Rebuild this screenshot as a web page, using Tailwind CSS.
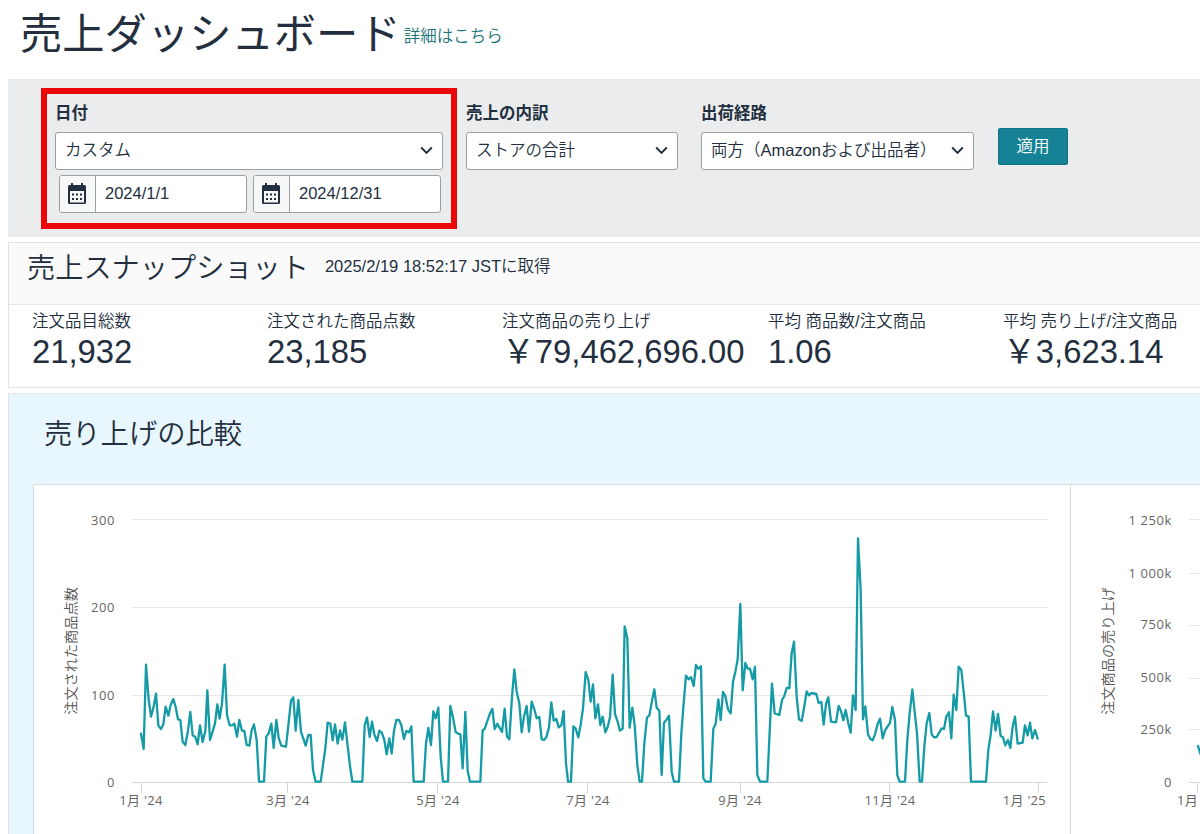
<!DOCTYPE html>
<html lang="ja">
<head>
    <meta charset="UTF-8">
    <meta name="viewport" content="width=device-width, initial-scale=1.0">
    <title>売上ダッシュボード</title>
    <script src="https://cdn.jsdelivr.net/npm/@tailwindcss/browser@4"></script>
</head>
<body class="w-[1200px] h-[834px] overflow-hidden bg-white pl-[8px] text-[#232f3e] text-[16.5px] font-['Liberation_Sans','Noto_Sans_CJK_JP',sans-serif]">
    <header class="flex h-[79px] pl-[12px] whitespace-nowrap">
        <h1 class="text-[42.3px] leading-[70px] font-normal">売上ダッシュボード</h1>
        <a class="ml-[3px] pt-[24px] leading-[25px] font-[350] text-[#1b7478]">詳細はこちら</a>
    </header>

    <!-- Filters -->
    <section class="flex h-[158px] bg-[#eaeced] whitespace-nowrap pt-[9px]">
        <div class="ml-[33px] w-[416px] h-[141px] border-[6px] border-[#ea0707] pl-[8px] pt-[6px]">
            <div class="h-[32px] leading-[27px] font-bold">日付</div>
            <div class="flex items-center justify-between w-[388px] h-[38px] bg-white border border-[#9a9fa3] rounded-[3px] pl-[9px] pr-[9px] pb-px font-[350]">
                カスタム
                <svg class="w-[13px] h-[9px]" viewBox="0 0 13 9" fill="none" stroke="#232f3e" stroke-width="1.9"><path d="M1.2 1.5 6.5 7l5.3-5.5"/></svg>
            </div>
            <div class="flex gap-[6px] mt-[5px] ml-[4px]">
                <div class="flex w-[188px] h-[38px] bg-white border border-[#9a9fa3] rounded-[3px] overflow-hidden">
                    <div class="w-[36px] border-r border-[#9a9fa3] bg-[#f7f8f8] flex items-center pl-[8px]">
                        <svg class="w-[18px] h-[22px]" viewBox="0 0 18 22"><path fill="#232f3e" fill-rule="evenodd" d="M3 0h2v2h8V0h2v2h1.500a1.500 1.500 0 0 1 1.500 1.500v16a1.500 1.500 0 0 1-1.500 1.500h-15A1.500 1.500 0 0 1 0 19.500v-16A1.500 1.500 0 0 1 1.500 2H3zM2 8v11.500h14V8z"/><path stroke="#232f3e" stroke-width="2" stroke-dasharray="2 2" d="M4 11.500h10M4 16h10"/></svg>
                    </div>
                    <span class="pl-[9px] leading-[35px]">2024/1/1</span>
                </div>
                <div class="flex w-[188px] h-[38px] bg-white border border-[#9a9fa3] rounded-[3px] overflow-hidden">
                    <div class="w-[36px] border-r border-[#9a9fa3] bg-[#f7f8f8] flex items-center pl-[8px]">
                        <svg class="w-[18px] h-[22px]" viewBox="0 0 18 22"><path fill="#232f3e" fill-rule="evenodd" d="M3 0h2v2h8V0h2v2h1.500a1.500 1.500 0 0 1 1.500 1.500v16a1.500 1.500 0 0 1-1.500 1.500h-15A1.500 1.500 0 0 1 0 19.500v-16A1.500 1.500 0 0 1 1.500 2H3zM2 8v11.500h14V8z"/><path stroke="#232f3e" stroke-width="2" stroke-dasharray="2 2" d="M4 11.500h10M4 16h10"/></svg>
                    </div>
                    <span class="pl-[9px] leading-[35px]">2024/12/31</span>
                </div>
            </div>
        </div>
        <div class="ml-[9px] pt-[12px] w-[212px]">
            <div class="h-[32px] leading-[27px] font-bold">売上の内訳</div>
            <div class="flex items-center justify-between h-[38px] bg-white border border-[#9a9fa3] rounded-[3px] pl-[9px] pr-[9px] pb-px font-[350]">
                ストアの合計
                <svg class="w-[13px] h-[9px]" viewBox="0 0 13 9" fill="none" stroke="#232f3e" stroke-width="1.9"><path d="M1.2 1.5 6.5 7l5.3-5.5"/></svg>
            </div>
        </div>
        <div class="ml-[23px] pt-[12px] w-[273px]">
            <div class="h-[32px] leading-[27px] font-bold">出荷経路</div>
            <div class="flex items-center justify-between h-[38px] bg-white border border-[#9a9fa3] rounded-[3px] pl-[9px] pr-[9px] pb-px font-[350]">
                両方（Amazonおよび出品者）
                <svg class="w-[13px] h-[9px]" viewBox="0 0 13 9" fill="none" stroke="#232f3e" stroke-width="1.9"><path d="M1.2 1.5 6.500 7l5.3-5.5"/></svg>
            </div>
        </div>
        <button class="ml-[24px] mt-[40px] w-[70px] h-[37px] rounded-[2px] border border-[#0f7284] bg-[#158295] text-white font-[350]">適用</button>
    </section>

    <!-- Snapshot -->
    <section class="mt-[5px] h-[146px] border border-r-0 border-[#dfe1e2] whitespace-nowrap">
        <div class="flex h-[62px] bg-[#fafafa] border-b border-[#e4e5e6] pl-[18px]">
            <h2 class="text-[28.2px] leading-[51px] font-[350]">売上スナップショット</h2>
            <span class="ml-[16px] leading-[46px] font-[350]">2025/2/19 18:52:17 JSTに取得</span>
        </div>
        <div class="grid grid-cols-[235px_235px_266px_235px_220px] pl-[23px] pt-[4px]">
            <div>
                <div class="leading-[25px] font-[350]">注文品目総数</div>
                <div class="text-[32.8px] leading-[36px]">21,932</div>
            </div>
            <div>
                <div class="leading-[25px] font-[350]">注文された商品点数</div>
                <div class="text-[32.8px] leading-[36px]">23,185</div>
            </div>
            <div>
                <div class="leading-[25px] font-[350]">注文商品の売り上げ</div>
                <div class="text-[32.8px] leading-[36px]">￥79,462,696.00</div>
            </div>
            <div>
                <div class="leading-[25px] font-[350]">平均 商品数/注文商品</div>
                <div class="text-[32.8px] leading-[36px]">1.06</div>
            </div>
            <div>
                <div class="leading-[25px] font-[350]">平均 売り上げ/注文商品</div>
                <div class="text-[32.8px] leading-[36px]">￥3,623.14</div>
            </div>
        </div>
    </section>

    <!-- Comparison charts -->
    <section class="mt-[5px] h-[450px] border border-r-0 border-[#dde3e7] bg-[#e8f6fe]">
        <h2 class="h-[90px] pl-[35px] text-[28.300px] leading-[80px] font-[350]">売り上げの比較</h2>
        <div class="flex ml-[24px] bg-white border-t border-l border-[#d5dde3] h-[360px] overflow-hidden">
            <svg class="shrink-0 w-[1036px] h-[349px] font-['Open_Sans','Noto_Sans_CJK_JP',sans-serif]" viewBox="34 485 1036 349" font-size="13" letter-spacing=".6" fill="#666">
                <path stroke="#e6e6e6" d="M132 519.500h915M132 607.500h915M132 695.500h915"/>
                <path stroke="#d3d7db" d="M132 782.500h915M141.500 783v10M287.500 783v10M437.500 783v10M587.500 783v10M740.500 783v10M889.500 783v10M1038.500 783v10"/>
                <g text-anchor="end">
                    <text x="115" y="525">300</text>
                    <text x="115" y="612">200</text>
                    <text x="115" y="700">100</text>
                    <text x="115" y="787">0</text>
                    <text x="1046" y="804.500" letter-spacing=".3">1月 '25</text>
                </g>
                <g text-anchor="middle" letter-spacing=".3">
                    <text x="141" y="804.500">1月 '24</text>
                    <text x="288" y="804.500">3月 '24</text>
                    <text x="438" y="804.500">5月 '24</text>
                    <text x="588" y="804.500">7月 '24</text>
                    <text x="740" y="804.500">9月 '24</text>
                    <text x="890" y="804.500">11月 '24</text>
                </g>
                <text transform="translate(76 651) rotate(-90)" text-anchor="middle" font-size="14.2" letter-spacing="0" font-weight="350" fill="#555">注文された商品点数</text>
                <g fill="none" stroke="#149ba6" stroke-width="6.9" stroke-linejoin="round" stroke-linecap="round">
                    <polyline transform="translate(120 640) scale(.33333)" points="63,281 71,327 78,74 86,178 93,230 101,200 108,161 115,256 123,267 130,253 137,200 145,227 152,195 160,177 167,201 174,238 181,240 188,305 196,315 204,272 211,216 218,286 226,291 233,313 240,256 248,306 256,273 262,151 270,300 277,278 285,250 292,193 299,236 306,190 314,74 321,225 329,256 336,256 343,251 351,290 358,240 366,272 373,273 380,315 388,317 395,271 402,253 410,300 417,425 432,425 439,290 446,280 454,251 461,324 469,240 476,294 484,317 498,320 505,256 513,182 520,172 527,272 535,180 543,275 557,317 565,285 572,285 579,390 587,425 602,425 616,325 623,248 631,251 638,301 645,253 653,311 660,272"/>
                    <polyline transform="translate(340 640) scale(.33333)" points="0,272 7,299 15,247 22,310 30,378 37,425 67,425 74,256 81,232 89,291 96,245 103,283 111,303 118,272 125,277 133,300 140,343 148,295 155,341 162,272 169,240 177,240 184,256 192,297 199,273 207,277 214,259 221,425 251,425 258,310 265,264 273,315 280,214 287,235 295,203 302,350 309,425 324,425 331,198 339,232 347,276 354,281 361,283 368,385 376,216 383,392 390,425 421,425 428,270 434,267 442,243 450,220 457,206 464,267 472,251 479,264 486,276 494,206 501,290 508,298 516,170 523,88 530,155 538,190 545,277 552,230 560,198 567,275 575,185 583,208 590,235 598,231 605,298 612,300 619,292 627,262 634,187 641,242 649,237 656,262 664,256 671,214"/>
                    <polyline transform="translate(560 600) scale(.33333)" points="11,334 18,490 24,545 33,545 40,379 47,386 55,412 62,375 69,325 77,216 85,240 92,305 99,253 106,355 114,313 121,375 128,350 136,397 143,381 150,352 158,224 165,342 173,365 180,392 188,386 194,79 202,115 209,383 217,323 224,375 232,495 239,545 246,545 253,430 261,352 268,347 275,308 283,268 290,323 298,332 305,525 312,368 319,360 327,347 335,515 342,545 357,545 364,400 371,310 378,227 386,238 393,231 401,258 408,195 415,206 423,199 430,535 437,545 452,545 460,386 467,371 475,298 482,360 489,276 496,288 504,328 512,340 519,245 526,216 533,178 541,12 548,271 556,189 563,206 570,206 578,238 585,200 592,525 600,545 622,545 629,395 636,251 644,340 658,345 666,300 673,288 680,264 688,264"/>
                    <polyline transform="translate(780 520) scale(.33333)" points="28,504 35,400 42,365 50,530 57,598 65,603 72,565 80,514 87,526 94,519 109,522 116,549 124,546 131,614 138,552 145,532 153,605 168,607 176,558 183,573 190,601 197,570 205,610 212,638 219,526 227,570 234,55 242,210 249,598 256,559 264,643 271,657 278,661 286,640 293,611 300,596 308,655 315,632 323,619 330,609 337,561 345,600 352,766 359,785 375,785 382,660 389,580 397,508 404,575 411,640 419,785 426,785 433,680 440,610 448,579 455,643 462,652 470,651 485,625 492,627 499,589 507,577 514,655 521,524 529,570 536,440 544,450 551,515 558,587 566,590 573,785 618,785 625,690 632,645 639,574 647,632 654,582 662,648 669,652 676,676 684,660 691,684 698,620 705,590 713,671 728,668 735,616 743,646 750,608 757,655 765,630 773,656"/>
                </g>
            </svg>
            <svg class="shrink-0 w-[130px] h-[349px] font-['Open_Sans','Noto_Sans_CJK_JP',sans-serif]" viewBox="1070 485 130 349" font-size="13" letter-spacing=".6" fill="#666">
                <path stroke="#d5dadd" d="M1070.500 485v349"/>
                <path stroke="#e6e6e6" d="M1189 519.500h20M1189 573.500h20M1189 625.500h20M1189 678.500h20M1189 729.500h20"/>
                <path stroke="#d3d7db" d="M1189 782.500h20M1197.500 783v10"/>
                <g text-anchor="end">
                    <text x="1172" y="525">1 250k</text>
                    <text x="1172" y="578">1 000k</text>
                    <text x="1172" y="629">750k</text>
                    <text x="1172" y="682">500k</text>
                    <text x="1172" y="734">250k</text>
                    <text x="1172" y="787">0</text>
                </g>
                <text x="1177" y="804.500" letter-spacing=".3">1月</text>
                <text transform="translate(1113 651) rotate(-90)" text-anchor="middle" font-size="14.2" letter-spacing="0" font-weight="350" fill="#555">注文商品の売り上げ</text>
                <path fill="none" stroke="#149ba6" stroke-width="2.3" stroke-linecap="round" d="M1198 746l2.500 8"/>
            </svg>
        </div>
    </section>
</body>
</html>
